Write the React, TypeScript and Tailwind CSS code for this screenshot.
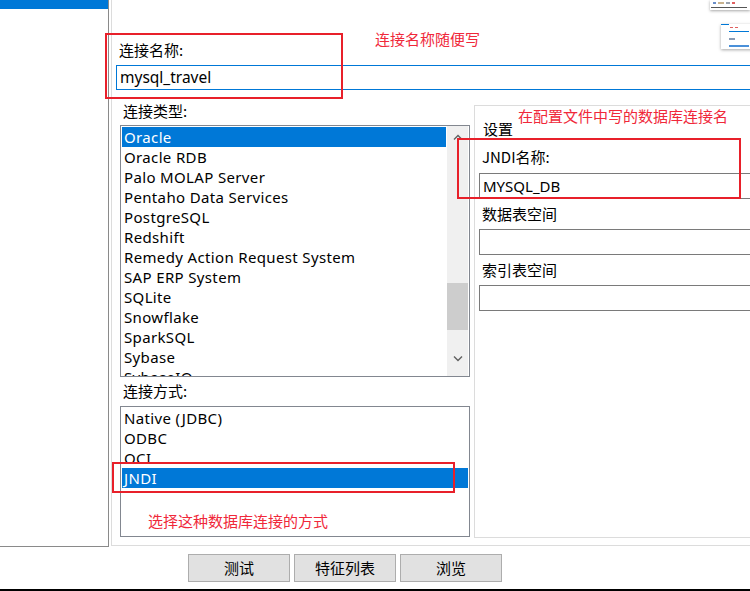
import React from 'react';

const ui = { fontFamily: '"Noto Sans", "Noto Sans CJK SC", sans-serif' };
const cjk = { fontFamily: '"Noto Sans CJK SC", "Noto Sans", sans-serif' };

const dbTypes = [
  'Oracle',
  'Oracle RDB',
  'Palo MOLAP Server',
  'Pentaho Data Services',
  'PostgreSQL',
  'Redshift',
  'Remedy Action Request System',
  'SAP ERP System',
  'SQLite',
  'Snowflake',
  'SparkSQL',
  'Sybase',
  'SybaseIQ',
];

const accessTypes = ['Native (JDBC)', 'ODBC', 'OCI', 'JNDI'];

const Chevron: React.FC<{ up?: boolean }> = ({ up }) => (
  <svg width="10" height="6" viewBox="0 0 10 6" className="block">
    <path
      d={up ? 'M1 5.5 L5 1.5 L9 5.5' : 'M1 0.5 L5 4.5 L9 0.5'}
      fill="none"
      stroke="#606060"
      strokeWidth="1.4"
    />
  </svg>
);

const ListItem: React.FC<{ label: string; selected?: boolean }> = ({ label, selected }) => (
  <div
    className={`h-[20px] pl-[2px] text-[15px] tracking-[0.35px] leading-[20px] whitespace-nowrap overflow-hidden ${
      selected ? 'bg-[#0078d7] text-white' : 'text-black'
    }`}
    style={ui}
  >
    {label}
  </div>
);

const Label: React.FC<{ children: React.ReactNode; className?: string }> = ({ children, className = '' }) => (
  <div className={`h-[20px] text-[15px] leading-[20px] text-black ${className}`} style={cjk}>
    {children}
  </div>
);

// red marker overlays drawn on the screenshot
const RedBox: React.FC<{ className: string }> = ({ className }) => (
  <div className={`absolute border-2 border-[#e8202a] pointer-events-none ${className}`} />
);

const RedNote: React.FC<{ className: string; children: React.ReactNode }> = ({ className, children }) => (
  <div
    className={`absolute text-[15px] leading-[18px] text-[#f0283a] whitespace-nowrap ${className}`}
    style={cjk}
  >
    {children}
  </div>
);

export default function App() {
  return (
    <div className="relative w-[750px] h-[591px] bg-white overflow-hidden flex flex-col">
      <div className="flex h-[547px] flex-none overflow-hidden">
        {/* left nav panel */}
        <div className="w-[109px] h-[547px] flex-none border-r border-b border-[#8a8a8a]">
          <div className="h-[9px] bg-[#0078d7]" />
        </div>

        {/* main form */}
        <div className="w-[641px] flex-none pl-[2px] overflow-hidden">
          <div className="h-[546px] border-l border-b border-[#dcdcdc] w-[700px] overflow-hidden">
            <Label className="mt-[40px] ml-[7px]">连接名称:</Label>
            <div
              className="mt-[5px] ml-[4px] h-[25px] w-[700px] border border-[#0078d7] pl-[3px] text-[15.5px] leading-[23px]"
              style={ui}
            >
              mysql_travel
            </div>

            <div className="flex mt-[10px]">
              {/* left column */}
              <div className="w-[350px] ml-[8px] flex-none">
                <Label className="mt-[1px] pl-[3px]">连接类型:</Label>
                <div className="mt-[4px] h-[252px] border border-[#828790] flex overflow-hidden">
                  <div className="flex-1 p-[1px] overflow-hidden">
                    {dbTypes.map((t, i) => (
                      <ListItem key={t} label={t} selected={i === 0} />
                    ))}
                  </div>
                  <div className="w-[21px] mr-[1px] bg-[#f0f0f0] flex flex-col items-center">
                    <div className="h-[22px] flex items-center justify-center">
                      <Chevron up />
                    </div>
                    <div className="mt-[135px] w-[21px] h-[47px] bg-[#cdcdcd]" />
                    <div className="flex-1" />
                    <div className="h-[26px] flex items-start justify-center pt-[6px]">
                      <Chevron />
                    </div>
                  </div>
                </div>

                <Label className="mt-[4px] pl-[3px]">连接方式:</Label>
                <div className="mt-[5px] h-[131px] border border-[#828790] p-[1px]">
                  {accessTypes.map((t) => (
                    <ListItem key={t} label={t} selected={t === 'JNDI'} />
                  ))}
                </div>
              </div>

              {/* settings box */}
              <div className="ml-[4px] mt-[5px] h-[433px] flex-1 border-l border-t border-b border-[#dcdcdc] pl-[4px]">
                <Label className="mt-[13px] pl-[4px]">设置</Label>
                <Label className="mt-[8px] pl-[3px]">JNDI名称:</Label>
                <div
                  className="mt-[6px] h-[26px] border border-[#7a7a7a] pl-[3px] text-[15px] leading-[24px]"
                  style={ui}
                >
                  MYSQL_DB
                </div>
                <Label className="mt-[5px] pl-[3px]">数据表空间</Label>
                <div className="mt-[5px] h-[26px] border border-[#7a7a7a]" />
                <Label className="mt-[5px] pl-[3px]">索引表空间</Label>
                <div className="mt-[5px] h-[26px] border border-[#7a7a7a]" />
              </div>
            </div>
          </div>
        </div>
      </div>

      {/* buttons */}
      <div className="flex gap-[4px] pl-[188px] mt-[7px]">
        {['测试', '特征列表', '浏览'].map((b) => (
          <div
            key={b}
            className="w-[102px] h-[28px] border border-[#adadad] bg-[#e1e1e1] flex items-center justify-center text-[15px] text-black"
            style={cjk}
          >
            {b}
          </div>
        ))}
      </div>
      <div className="mt-[7px] h-[2px] bg-black" />

      {/* tiny window thumbnails at top right */}
      <div className="absolute left-[710px] top-0 w-[40px] h-[10px] bg-white shadow-[0_1px_3px_rgba(0,0,0,0.35)]">
        <div className="mt-[2px] ml-[3px] flex gap-[2px]">
          <div className="w-[3px] h-[2px] bg-[#6b8fc9]" />
          <div className="w-[6px] h-[2px] bg-[#c9b38e]" />
          <div className="w-[4px] h-[2px] bg-[#9aa3b0]" />
          <div className="w-[3px] h-[2px] bg-[#e06060]" />
        </div>
        <div className="mt-[3px] ml-[1px] w-[36px] h-[1px] bg-[#555]" />
      </div>
      <div className="absolute left-[721px] top-[24px] w-[32px] h-[25px] bg-white shadow-[0_1px_3px_rgba(0,0,0,0.35)]">
        <div className="w-[8px] h-[1px] bg-[#0078d7]" />
        <div className="mt-[2px] ml-[9px] flex gap-[2px]">
          <div className="w-[3px] h-[1px] bg-[#e06060]" />
          <div className="w-[3px] h-[1px] bg-[#e06060]" />
        </div>
        <div className="mt-[3px] ml-[8px] w-[20px] h-[1px] bg-[#0078d7]" />
        <div className="mt-[6px] ml-[8px] w-[6px] h-[2px] bg-[#8a9bb3]" />
        <div className="mt-[5px] ml-[8px] w-[20px] h-[2px] bg-[#4a90d9]" />
      </div>

      {/* annotations */}
      <RedBox className="left-[105px] top-[33px] w-[238px] h-[66px]" />
      <RedBox className="left-[457px] top-[138px] w-[284px] h-[61px]" />
      <RedBox className="left-[112px] top-[462px] w-[343px] h-[31px]" />
      <RedNote className="left-[375px] top-[30px]">连接名称随便写</RedNote>
      <RedNote className="left-[518px] top-[107px] text-[14.7px]">在配置文件中写的数据库连接名</RedNote>
      <RedNote className="left-[148px] top-[512px]">选择这种数据库连接的方式</RedNote>
    </div>
  );
}
